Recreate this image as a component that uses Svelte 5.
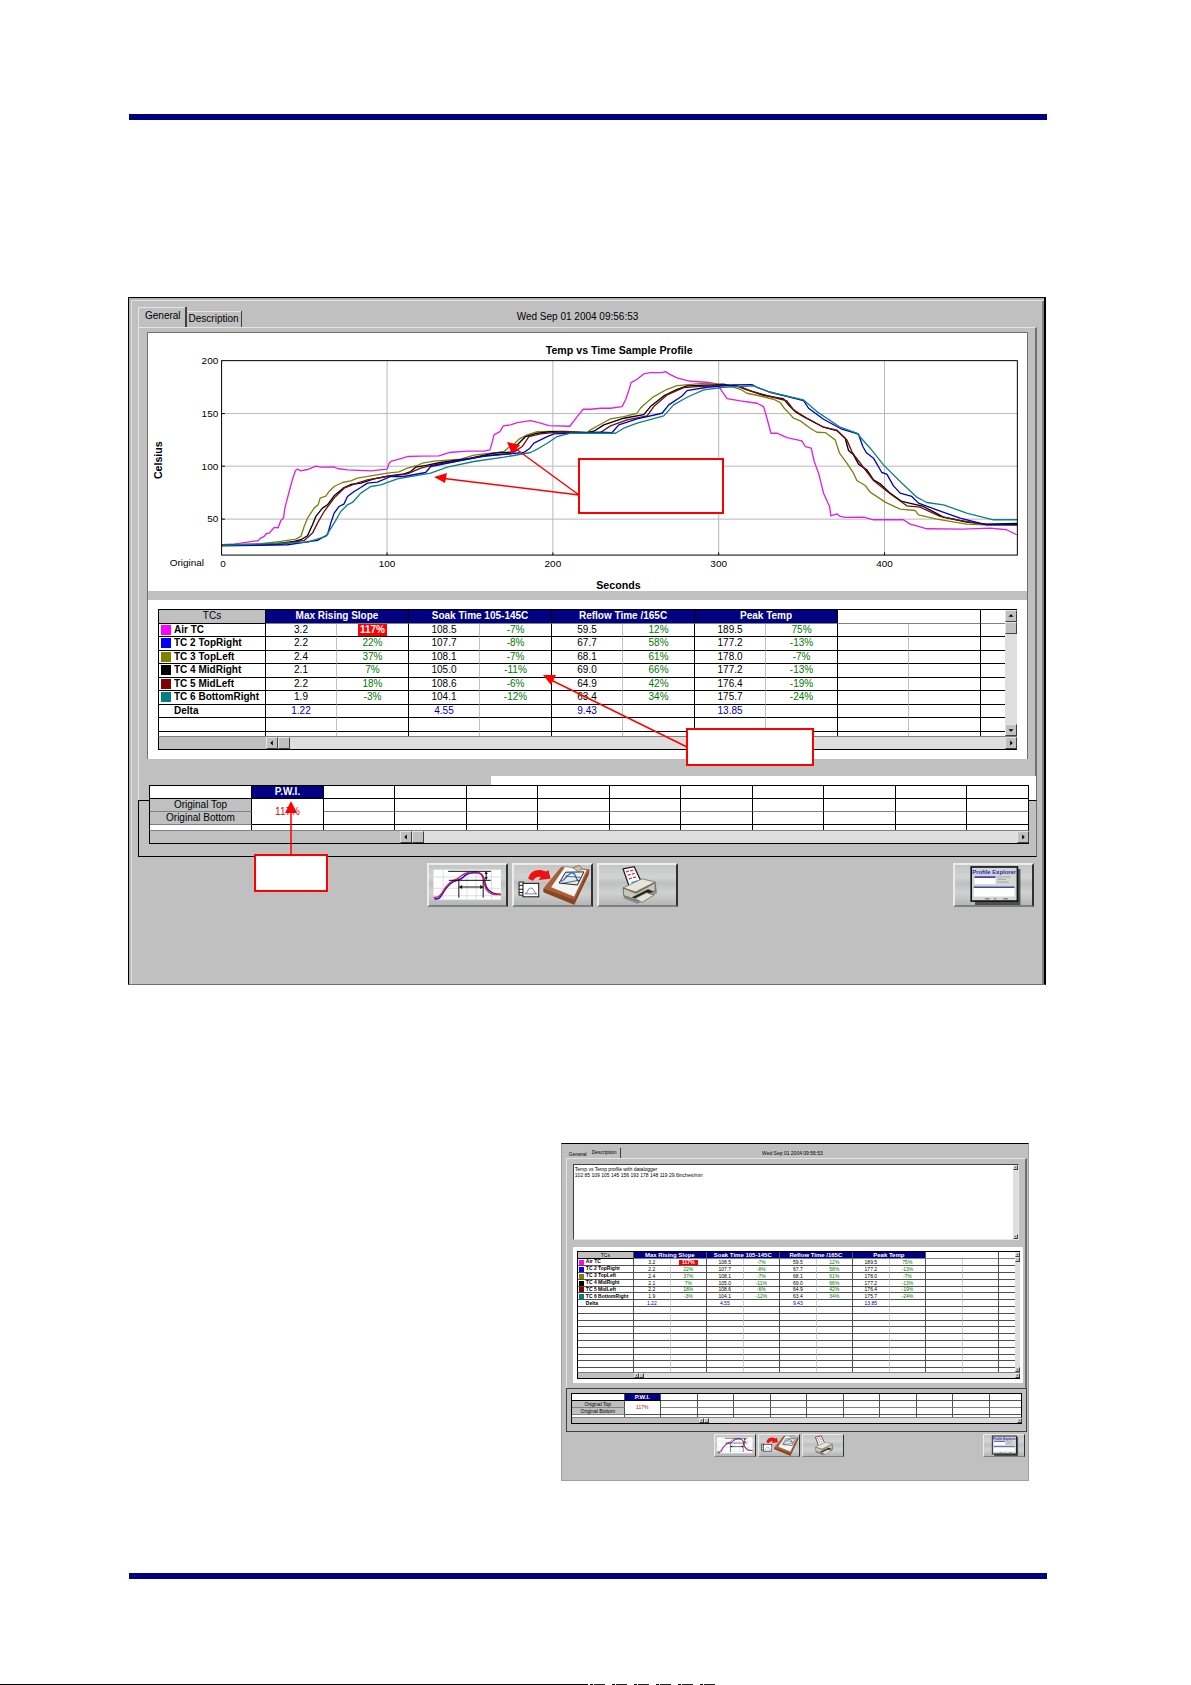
<script>
  const tcs = [
    { name: 'Air TC', color: '#ff00ff', v: ['3.2', '117%', '108.5', '-7%', '59.5', '12%', '189.5', '75%'] },
    { name: 'TC 2 TopRight', color: '#0000ff', v: ['2.2', '22%', '107.7', '-8%', '67.7', '58%', '177.2', '-13%'] },
    { name: 'TC 3 TopLeft', color: '#808000', v: ['2.4', '37%', '108.1', '-7%', '68.1', '61%', '178.0', '-7%'] },
    { name: 'TC 4 MidRight', color: '#000000', v: ['2.1', '7%', '105.0', '-11%', '69.0', '66%', '177.2', '-13%'] },
    { name: 'TC 5 MidLeft', color: '#800000', v: ['2.2', '18%', '108.6', '-6%', '64.9', '42%', '176.4', '-19%'] },
    { name: 'TC 6 BottomRight', color: '#008080', v: ['1.9', '-3%', '104.1', '-12%', '63.4', '34%', '175.7', '-24%'] },
    { name: 'Delta', color: 'transparent', delta: true, v: ['1.22', '', '4.55', '', '9.43', '', '13.85', ''] }
  ];
  const groups = ['Max Rising Slope', 'Soak Time 105-145C', 'Reflow Time /165C', 'Peak Temp'];
  const stamp = 'Wed Sep 01 2004 09:56:53';
  const notes = 'Temp vs Temp profile with datalogger\n102 85 109 105 145 156 193 178 148 119 29.6inches/min';

  // Curve points, in chart units (three per pixel at full size).
  const curves = [
    { color: '#e020e0', pts: '302,765 340,763 380,757 400,754 412,753 418,746 430,740 436,732 445,730 460,713 472,714 480,692 488,685 492,655 505,605 515,568 524,542 530,538 540,543 560,539 585,529 600,532 640,531 650,536 680,540 750,543 799,538 805,520 812,514 835,508 860,500 900,499 955,498 985,488 1040,484 1090,484 1108,480 1114,460 1120,435 1138,425 1148,408 1170,405 1190,398 1230,392 1260,400 1285,407 1348,409 1370,380 1388,358 1410,358 1440,355 1470,355 1505,350 1515,330 1524,305 1532,278 1550,268 1570,252 1590,248 1625,248 1635,245 1650,254 1670,264 1710,274 1760,277 1790,282 1802,300 1820,326 1860,333 1910,340 1930,350 1940,385 1952,430 1970,430 2000,443 2045,453 2055,470 2073,475 2082,515 2095,550 2110,610 2128,650 2132,678 2150,672 2160,680 2175,683 2230,682 2260,690 2350,690 2370,703 2395,710 2420,717 2530,718 2610,715 2660,720 2690,735' },
    { color: '#808010', pts: '302,765 420,762 480,755 525,748 540,740 550,710 560,685 580,655 592,645 598,625 615,619 625,605 640,590 665,578 690,573 710,565 750,558 800,550 835,546 860,535 890,527 905,520 940,514 1020,508 1060,496 1130,488 1150,485 1165,472 1180,463 1195,448 1220,435 1250,425 1330,424 1400,428 1410,420 1440,403 1470,387 1510,380 1550,370 1560,355 1570,345 1600,320 1640,298 1670,287 1740,281 1810,282 1860,298 1880,310 1910,316 1960,328 1980,338 1992,355 2000,363 2020,385 2040,393 2070,415 2090,427 2115,428 2145,450 2158,490 2180,520 2200,550 2210,572 2235,587 2250,607 2295,637 2340,658 2385,662 2395,675 2450,688 2540,703 2610,706 2692,706' },
    { color: '#000000', pts: '302,767 450,764 520,755 540,750 560,738 575,705 585,680 605,655 620,645 640,618 670,593 690,584 720,580 760,567 800,559 850,552 870,545 885,532 920,526 960,518 1050,505 1120,490 1170,487 1185,470 1215,440 1250,430 1290,425 1400,428 1420,424 1450,405 1510,385 1570,374 1590,350 1630,318 1670,298 1700,288 1810,284 1850,288 1870,296 1930,316 1990,327 2005,345 2025,365 2050,380 2110,412 2150,422 2175,445 2185,482 2200,495 2215,523 2240,540 2260,570 2280,582 2310,610 2345,635 2410,650 2470,682 2540,697 2600,703 2692,701' },
    { color: '#701010', pts: '302,767 480,764 550,752 575,730 590,700 610,665 640,625 670,595 700,583 740,570 800,560 860,552 900,535 940,525 1000,515 1080,500 1170,492 1190,480 1205,470 1225,440 1260,432 1320,426 1440,428 1470,408 1520,390 1580,378 1600,350 1640,315 1690,293 1730,290 1810,286 1860,290 1890,303 1970,325 2000,333 2020,360 2060,385 2110,412 2150,421 2180,450 2195,485 2205,500 2230,533 2260,572 2310,612 2360,648 2400,652 2460,680 2520,692 2590,703 2692,706' },
    { color: '#0000c8', pts: '302,768 500,765 590,752 620,735 630,700 640,670 655,650 670,642 680,620 700,605 720,593 740,580 770,577 810,560 850,560 915,548 930,530 1020,512 1100,497 1210,488 1228,475 1240,460 1280,440 1300,432 1440,427 1475,428 1495,405 1550,387 1625,370 1645,345 1685,318 1700,302 1760,292 1840,285 1895,284 1910,292 1950,307 2050,332 2065,355 2110,388 2165,418 2215,433 2228,470 2238,488 2260,505 2285,548 2300,553 2320,588 2340,610 2375,620 2395,640 2450,660 2520,685 2600,705 2692,704' },
    { color: '#108080', pts: '302,767 560,757 615,740 640,700 660,665 680,645 695,638 720,610 750,590 780,585 830,567 930,550 980,532 1060,515 1150,502 1230,488 1250,478 1280,460 1310,440 1350,430 1440,430 1485,430 1510,415 1550,400 1630,378 1660,345 1700,322 1750,300 1810,292 1900,288 1950,307 2050,330 2090,365 2160,412 2210,430 2250,475 2290,525 2340,575 2390,622 2420,638 2470,645 2540,670 2620,690 2692,690' }
  ];
  const xTicks = [[799, '100'], [1297, '200'], [1795, '300'], [2293, '400']];
  const yTicks = [[371, '150'], [529, '100'], [688, '50']];
</script>

{#snippet arrow(dir)}
  <button class="sb" aria-label="Scroll {dir}">
    <svg viewBox="0 0 12 12" class={dir}><path d="M7 3v6L4 6z" /></svg>
  </button>
{/snippet}

{#snippet tcTable(blank)}
  <div class="tcbox">
    <div class="tcgrid">
      <table>
        <colgroup>
          <col class="name" />
          {#each Array(10) as _, i}<col class={i % 2 ? 'b' : 'a'} />{/each}
          <col />
        </colgroup>
        <thead>
          <tr>
            <th class="tcs">TCs</th>
            {#each groups as g}<th colspan="2" class="navy">{g}</th>{/each}
            <th colspan="2"></th><th></th>
          </tr>
        </thead>
        <tbody>
          {#each tcs as t}
            <tr class:delta={t.delta}>
              <th scope="row"><i style:background={t.color}></i>{t.name}</th>
              {#each t.v as v, i}
                <td class:pct={i % 2}>{#if v === '117%'}<b>{v}</b>{:else}{v}{/if}</td>
              {/each}
              <td></td><td class="pct"></td><td></td>
            </tr>
          {/each}
          {#each Array(blank) as _}
            <tr><th></th>{#each Array(11) as _, i}<td class:pct={i % 2}></td>{/each}</tr>
          {/each}
          <tr class="last"><th></th>{#each Array(11) as _, i}<td class:pct={i % 2}></td>{/each}</tr>
        </tbody>
      </table>
      <div class="vbar">{@render arrow('up')}<span class="thumb"></span><span class="grow"></span>{@render arrow('down')}</div>
    </div>
    <div class="hbar"><span class="stub"></span>{@render arrow('left')}<span class="thumb"></span><span class="grow"></span>{@render arrow('right')}</div>
  </div>
{/snippet}

{#snippet pwiTable()}
  <div class="pwi">
    <table>
      <colgroup>
        <col class="label" />
        {#each Array(10) as _, i}<col class={i % 2 ? 'a' : 'b'} />{/each}
        <col />
      </colgroup>
      <tbody>
        <tr><th class="white"></th><th class="navy">P.W.I.</th>{#each Array(10) as _}<td></td>{/each}</tr>
        <tr><th>Original Top</th><td rowspan="2" class="red">117%</td>{#each Array(10) as _}<td class="soft"></td>{/each}</tr>
        <tr><th>Original Bottom</th>{#each Array(10) as _}<td></td>{/each}</tr>
        <tr class="last"><th class="white"></th>{#each Array(11) as _}<td></td>{/each}</tr>
      </tbody>
    </table>
    <div class="hbar"><span class="stub"></span>{@render arrow('left')}<span class="thumb"></span><span class="grow"></span>{@render arrow('right')}</div>
  </div>
{/snippet}

{#snippet toolbar()}
  <div class="tools">
    <button aria-label="Edit profile">
      <svg viewBox="4 6 228 120">
        <rect x="16" y="20" width="202" height="90" fill="#fff" />
        <path d="M16 42h202M16 76h202M16 98h202M45 20v90M116 20v90M144 20v90M190 20v90" stroke="#cfcfdc" stroke-width="2" />
        <path d="M18 107c14 2 16 0 24-14C54 72 66 55 86 52c16-2 16-8 26-16 14-9 40-9 48-2 12 12 8 38 22 48 12 10 18 12 36 12" fill="none" stroke="#2222d8" stroke-width="5" />
        <path d="M16 103c14 0 18-2 26-14C54 66 70 52 90 46c16-16 30-22 52-20 30 2 20 36 34 56 10 12 20 13 42 13" fill="none" stroke="#e8203c" stroke-width="4" />
        <path d="M60 25h128M62 52h126M92 54v50M165 54v50M94 72h70M174 27v22" fill="none" stroke="#111" stroke-width="3" />
        <path d="M92 72l10-6v12zM166 72l-10-6v12zM174 25l-5 8h10zM174 51l-5-8h10z" fill="#111" />
      </svg>
    </button>
    <button aria-label="Copy to clipboard">
      <svg viewBox="4 4 232 122">
        <path d="M96 78l56-72 84 12-48 106z" fill="#777" opacity=".5" />
        <path d="M92 76l54-66 86 8-42 90-4 17z" fill="#a8603a" />
        <path d="M92 76l95 34 44-92v14l-45 93-94-38z" fill="#8a4424" />
        <path d="M116 72l42-62 66 10-38 80z" fill="#f4f6f6" />
        <path d="M160 26l56-1-20 40-56-6z" fill="#e3eef2" stroke="#222" stroke-width="3" />
        <path d="M146 54c12-2 20-26 34-26 14 2 8 18 20 26" fill="none" stroke="#3464c8" stroke-width="4" />
        <path d="M150 60l52-10M160 38l46 4" stroke="#222" stroke-width="2" />
        <path d="M182 12l20-7 8 10-10 10z" fill="#c9c595" stroke="#555" stroke-width="2" />
        <path d="M46 46c4-24 30-34 54-22l8-4 6 26-36 4 6-10c-12-2-18 4-24 12z" fill="#f01010" />
        <path d="M18 56h14v40H18zM18 66h12M18 78h12M18 88h12" fill="#fff" stroke="#111" stroke-width="3" />
        <rect x="30" y="60" width="48" height="41" fill="#fff" stroke="#111" stroke-width="3" />
        <path d="M36 92c10 0 6-18 18-18s8 18 18 18M36 92h36" fill="none" stroke="#3a3aa8" stroke-width="2" />
      </svg>
    </button>
    <button aria-label="Print">
      <svg viewBox="4 4 232 122">
        <path d="M78 76l80-24 18 10 4 28-60 32-42-16z" fill="#555" opacity=".5" />
        <path d="M76 16l34-7 24 52-38 12z" fill="#fff" stroke="#222" stroke-width="4" />
        <path d="M85 25l26-6M90 35l25-6M94 46l24-6" stroke="#d8304c" stroke-width="4" stroke-dasharray="9 4" />
        <path d="M101 58l22-6" stroke="#30b8d8" stroke-width="5" />
        <path d="M76 74l58-28 40 10-60 30z" fill="#e9e5d8" stroke="#555" stroke-width="2" />
        <path d="M76 74l40 16 58-32v24l-56 30-40-15z" fill="#cbc6b4" stroke="#444" stroke-width="2" />
        <path d="M102 103l50-25 16 6-48 24z" fill="#222" />
        <path d="M112 106l36-18 22 8-36 22z" fill="#e4e0d2" stroke="#555" stroke-width="2" />
      </svg>
    </button>
    <button class="end" aria-label="Profile Explorer">
      <svg viewBox="4 6 232 122">
        <path d="M60 18h142v110H64z" fill="#333" opacity=".8" />
        <rect x="52" y="12" width="141" height="104" fill="#d4d6d4" stroke="#111" stroke-width="5" />
        <text x="122" y="33" text-anchor="middle" class="pe">Profile Explorer</text>
        <path d="M62 46h64v18H62zM60 76h124v26H60z" fill="#fff" />
        <path d="M62 43h64M60 74h124" stroke="#4444b0" stroke-width="5" />
        <path d="M132 42h40M132 50h26M132 58h34" stroke="#b0b0aa" stroke-width="4" />
        <path d="M94 109h14M122 109h6M150 109h14" stroke="#888" stroke-width="5" />
      </svg>
    </button>
  </div>
{/snippet}

<main>
  <hr />
  <section class="window big">
    <div class="tabrow">
      <div class="tabs" role="tablist">
        <button class="tab on" role="tab" aria-selected="true">General</button>
        <button class="tab" role="tab" aria-selected="false">Description</button>
      </div>
      <span class="stamp">{stamp}</span>
    </div>
    <div class="page">
      <div class="sheet">
        <svg class="chart" viewBox="81 129 2640 774" role="img" aria-label="Temp vs Time Sample Profile">
          {#each xTicks as [x, label]}
            <path d="M{x} 212V796" class="grid" />
            <path d="M{x} 788v8" class="axis" />
            <text {x} y="831" text-anchor="middle">{label}</text>
          {/each}
          {#each yTicks as [y, label]}
            <path d="M302 {y}H2692" class="grid" />
            <path d="M302 {y}h10" class="axis" />
            <text x="292" y={y + 10} text-anchor="end">{label}</text>
          {/each}
          <text x="292" y="222" text-anchor="end">200</text>
          <text x="306" y="831" text-anchor="middle">0</text>
          <text x="146" y="828">Original</text>
          {#each curves as c}
            <polyline points={c.pts} stroke={c.color} />
          {/each}
          <rect x="302" y="212" width="2390" height="584" class="axis" />
          <text x="1496" y="192" text-anchor="middle" class="bold">Temp vs Time Sample Profile</text>
          <text x="1494" y="898" text-anchor="middle" class="bold">Seconds</text>
          <text transform="translate(124 511) rotate(-90)" text-anchor="middle" class="bold">Celsius</text>
        </svg>
        <div class="split"></div>
        {@render tcTable(1)}
      </div>
    </div>
    <div class="group"><div class="strip"></div>{@render pwiTable()}</div>
    {@render toolbar()}
    <svg class="marks" viewBox="128 297 918 688" aria-hidden="true">
      <g class="line"><path d="M579 495L512 446M579 495L440 478M687 747L549 679M291 855V806" /></g>
      <path fill="#f00" d="M507 442l13 3-8 9zM434 477l13-4-2 10zM543 675l13 0-5 10zM291 801l6 12h-12z" />
      <g class="note">
        <rect x="579" y="459" width="144" height="54" />
        <rect x="687" y="729" width="126" height="36" />
        <rect x="255" y="855" width="72" height="36" />
      </g>
    </svg>
  </section>

  <section class="window small">
    <div class="tabrow">
      <div class="tabs" role="tablist">
        <button class="tab" role="tab" aria-selected="false">General</button>
        <button class="tab on" role="tab" aria-selected="true">Description</button>
      </div>
      <span class="stamp">{stamp}</span>
    </div>
    <div class="page">
      <div class="memo">
        <textarea aria-label="Description" value={notes}></textarea>
        <div class="vbar">{@render arrow('up')}<span class="grow"></span>{@render arrow('down')}</div>
      </div>
      <div class="sheet">{@render tcTable(9)}</div>
    </div>
    <div class="group">{@render pwiTable()}</div>
    {@render toolbar()}
  </section>
  <hr />
</main>
<footer><span class="solid"></span><span class="broken"></span></footer>

<style>
  :global(body) { background: #fff; }
  main { display: flex; flex-direction: column; padding: 114px 144px 105px 129px; font-family: "Liberation Sans", Arial, sans-serif; color: #000; }
  hr { margin: 0; border: 0; height: 6px; width: 100%; background: #000080; }
  button { font: inherit; color: inherit; padding: 0; margin: 0; box-sizing: border-box; }
  svg { display: block; }

  .window { position: relative; box-sizing: border-box; background: #c0c0c0; font-size: var(--fs); line-height: var(--row); }
  .big {
    --fs: 10px; --head: 10px; --row: 12px; --bar: 12px; --name: 107px; --a: 71px; --b: 72px; --label: 102px; --stub: 250px;
    margin: 177px 1px 0 -1px; padding: 0 7px 0 9px; height: 688px;
    border: 1px solid #000; border-right-width: 2px; border-bottom-color: #707070;
    box-shadow: inset 3px 3px 0 -1px #b4b4b4, inset 4px 4px 0 -1px #e4e4e4, inset -2px 0 0 #808080;
  }
  .small {
    --fs: 5px; --head: 6px; --row: 6px; --bar: 5px; --name: 56px; --a: 37px; --b: 36px; --label: 53px; --stub: 127px;
    align-self: flex-end; width: 51%; margin: 158px 18px 92px 0; padding: 0 1px 0 4px; height: 338px;
    border: 1px solid #a0a0a0; border-top-color: #000;
  }

  .tabrow { position: relative; display: flex; align-items: flex-end; }
  .big .tabrow { height: 29px; }
  .small .tabrow { height: 14px; }
  .tabs { display: flex; align-items: flex-end; }
  .tab { background: #c0c0c0; border: 0 solid #404040; border-right-width: 1px; box-shadow: inset 0 1px #e4e4e4; white-space: nowrap; }
  .big .tab { height: 16px; padding: 0 2px; }
  .big .tab.on { height: 20px; padding: 0 4px 2px 7px; border-right-width: 2px; box-shadow: inset 1px 1px #e4e4e4; }
  .small .tab { height: 8px; padding: 0 3px; border: 0; box-shadow: none; }
  .small .tab.on { height: 10px; padding: 0 3px 2px 2px; border-right: 1px solid #404040; }
  .stamp { position: absolute; left: 0; right: 0; text-align: center; }
  .big .stamp { top: 13px; padding-right: 20px; }
  .small .stamp { top: 6px; padding-right: 8px; }

  .page { border: 1px solid #e4e4e4; border-right: 2px solid #707070; border-bottom: 0; }
  .big .page { padding: 4px 7px 0 8px; height: 468px; }
  .big .sheet { border: 1px solid #707070; border-bottom: 0; }
  .split { height: 9px; background: #c0c0c0; }
  .chart { width: 100%; height: auto; background: #fff; font-size: 30px; }
  .chart polyline { fill: none; stroke-width: 4; stroke-linejoin: round; }
  .grid { stroke: #b8b8b8; stroke-width: 3; }
  .axis { stroke: #000; stroke-width: 3; fill: none; }
  .bold { font-weight: bold; font-size: 32px; }

  .tcbox { background: #fff; }
  .big .tcbox { padding: 9px 10px; }
  .small .tcbox { padding: 4px 3px 4px 4px; }
  .tcgrid { display: flex; border: 1px solid #000; border-right: 0; border-bottom: 1px solid #808080; }
  table { border-collapse: separate; border-spacing: 0; table-layout: fixed; width: 100%; flex: 1; min-width: 0; background: #fff; }
  col.name { width: var(--name); }
  col.a { width: var(--a); }
  col.b { width: var(--b); }
  col.label { width: var(--label); }
  th, td { padding: 0; box-sizing: border-box; overflow: hidden; white-space: nowrap; text-align: center; border: 0 solid #000; border-width: 0 1px 1px 0; font-weight: normal; line-height: 1; }
  .tcgrid tr { height: 14px; }
  .big .tcgrid tbody tr:nth-child(odd) { height: 13px; }
  .tcgrid tbody th { font-weight: bold; text-align: left; }
  .tcgrid td:nth-child(even) { border-right-color: #c0c0c0; }
  .tcgrid thead th { border-bottom-color: #808080; }
  .tcgrid th.navy, .pwi th.navy { background: #000080; color: #fff; font-weight: bold; font-size: var(--head); }
  .tcgrid th.tcs { background: #c0c0c0; border-bottom-color: #000; }
  .pct { color: #007800; }
  .delta td { color: #0000a8; }
  td b { display: inline-block; background: #f00; color: #fff; padding: 1px 2px; }
  i { display: inline-block; vertical-align: middle; width: 10px; height: 10px; margin: 0 3px 0 2px; }
  th:last-child, td:last-child { border-right: 0; }
  tr.last td, tr.last th { border-bottom: 0; }
  .tcgrid tbody tr.last, .big .tcgrid tbody tr.last { height: 4px; }

  .small .tcgrid tr { height: 7px; }
  .small .tcgrid tbody tr:nth-child(5n) { height: 6px; }
  .small i { width: 5px; height: 5px; margin: 0 2px 0 1px; }
  .small th, .small td { border-color: #505050; }
  .small .tcgrid td:nth-child(even) { border-right-color: #d0d0d0; }
  .small td b { padding: 0 3px; }

  .vbar { display: flex; flex-direction: column; width: var(--bar); background: #dedede; }
  .hbar { display: flex; height: var(--bar); background: #dedede; border: 1px solid #000; border-top: 0; border-right: 0; }
  .grow { flex: 1; }
  .stub { background: #c0c0c0; width: var(--name); }
  .pwi .stub { width: var(--stub); }
  .sb, .thumb { width: var(--bar); height: var(--bar); background: #c0c0c0; border: 1px solid #e4e4e4; border-right-color: #404040; border-bottom-color: #404040; box-sizing: border-box; flex: none; display: block; }
  .sb svg { width: 100%; height: 100%; }
  .up { transform: rotate(90deg); }
  .down { transform: rotate(-90deg); }
  .right { transform: rotate(180deg); }

  .group { border: 1px solid #000; border-right-color: #707070; box-sizing: border-box; position: relative; }
  .big .group { height: 57px; padding: 0 7px 0 10px; }
  .big .pwi { margin-top: -16px; position: relative; }
  .strip { position: absolute; right: 0; top: -25px; width: 545px; height: 24px; background: #fff; border-bottom: 1px solid #000; }
  .pwi table { border: 1px solid #000; border-bottom-color: #808080; }
  .pwi th { background: #c0c0c0; border-bottom-color: #808080; }
  .pwi th.white { background: #fff; border-bottom-color: #000; }
  .pwi th.navy { border-bottom-color: #000; }
  .pwi td.soft { border-bottom-color: #808080; }
  .pwi td.red { color: #c81010; }
  .big .pwi tr { height: 13px; }
  .big .pwi tr.last { height: 5px; }
  .small .pwi tr { height: 7px; }
  .small .pwi tr.last { height: 2px; }
  .small .page { height: 230px; padding: 5px 2px 0 6px; box-sizing: border-box; }
  .memo { display: flex; height: 76px; box-sizing: border-box; background: #fff; border: 1px solid #404040; border-color: #404040 #e4e4e4 #e4e4e4 #404040; margin: 0 4px 7px 0; }
  textarea { flex: 1; min-width: 0; border: 0; padding: 1px; margin: 0; resize: none; outline: 0; overflow: hidden; white-space: pre; font: 5px/6px "Liberation Sans", Arial, sans-serif; background: #fff; }
  .small .group { height: 44px; padding: 4px; border-color: #404040; }

  .tools { display: flex; }
  .tools button { border: 2px solid #ececec; border-right-color: #303030; border-bottom-color: #808080; background: linear-gradient(#c4c6c6, #d2d4d4 30%, #bfc1c1 45%, #d0d2d2 70%, #b4b6b6); }
  .tools svg { width: 100%; height: 100%; }
  .tools .end { margin-left: auto; }
  .big .tools { margin-top: 6px; padding: 0 3px 0 289px; gap: 4px; }
  .big .tools button { width: 81px; height: 44px; }
  .small .tools { margin-top: 2px; padding: 0 2px 0 148px; gap: 2px; }
  .small .tools button { width: 42px; height: 23px; border-width: 1px; }
  .pe { font: bold 18px "Liberation Sans", Arial, sans-serif; fill: #2828b8; }

  .marks { position: absolute; left: -1px; top: -1px; width: 918px; height: 688px; pointer-events: none; }
  .line { stroke: #f00; stroke-width: 1.5; fill: none; }
  .note rect { fill: #fff; stroke: #f00; stroke-width: 2; }

  footer { display: flex; height: 1px; }
  .solid { width: 49.4%; background: #000; }
  .broken { width: 11%; background: repeating-linear-gradient(90deg, #fff 0 2px, #000 2px 5px, #fff 5px 6px, #222 6px 17px, #fff 17px 22px); }
</style>
